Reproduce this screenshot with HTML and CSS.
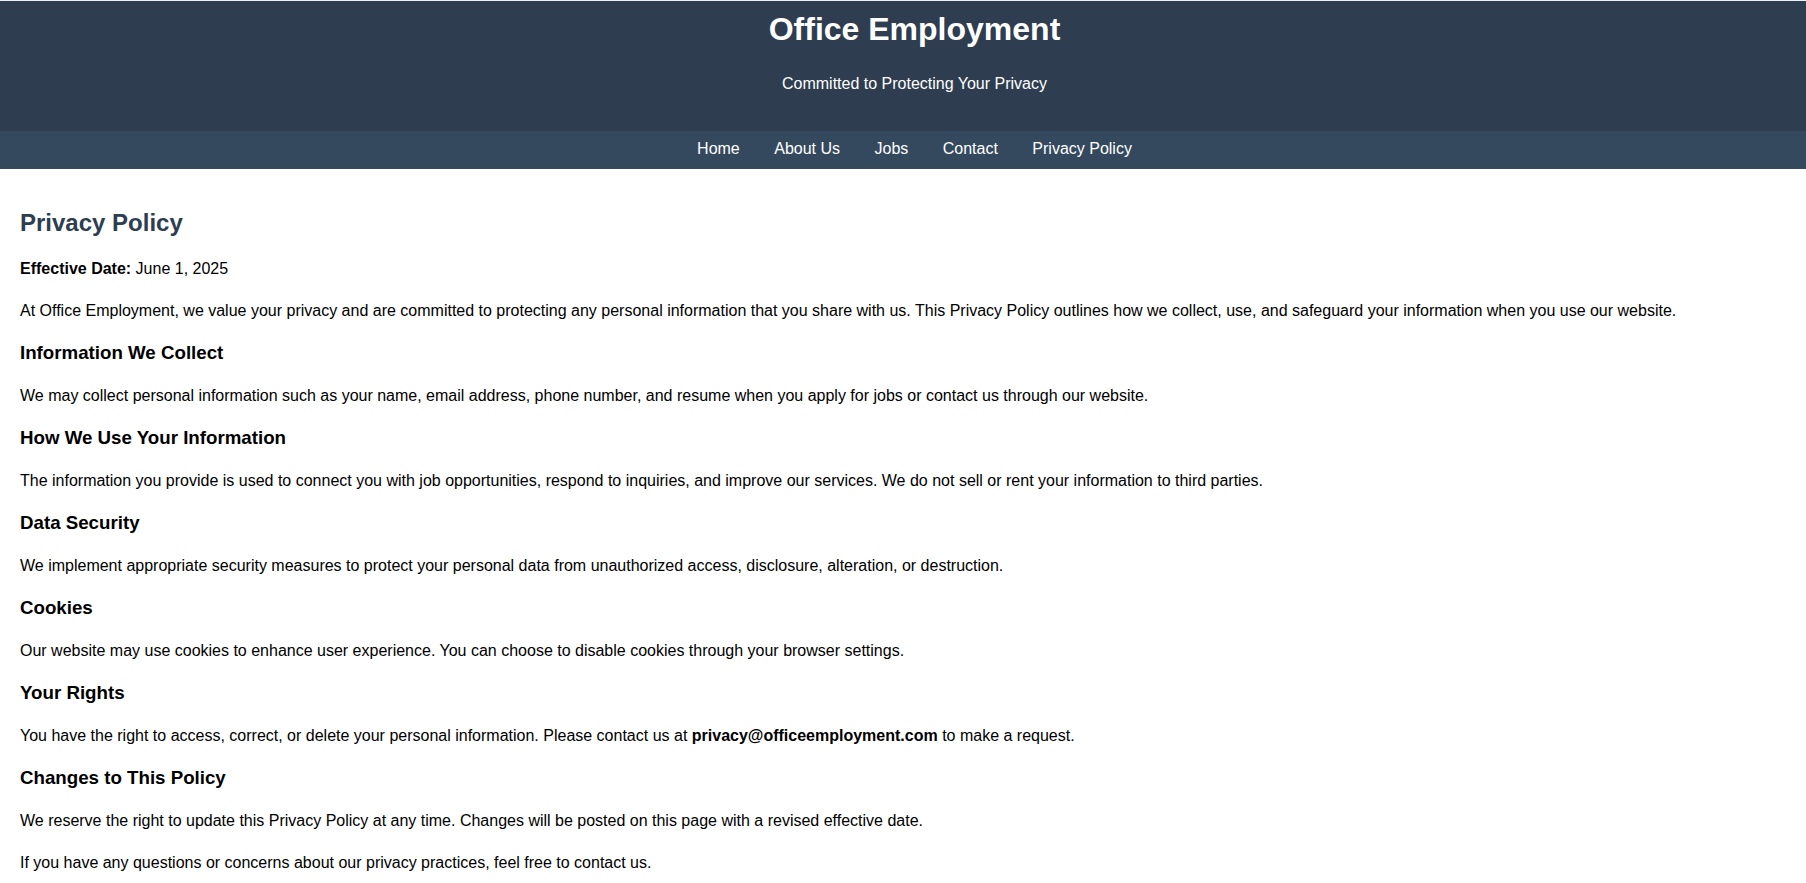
FILE: index.html
```html
<!DOCTYPE html>
<html lang="en">
<head>
<meta charset="utf-8">
<title>Privacy Policy - Office Employment</title>
<link rel="stylesheet" href="styles.css">
</head>
<body>
<header class="site-header">
  <h1 class="site-title">Office Employment</h1>
  <p class="site-tagline">Committed to Protecting Your Privacy</p>
</header>
<nav class="site-nav">
  <a href="#">Home</a>
  <a href="#">About Us</a>
  <a href="#">Jobs</a>
  <a href="#">Contact</a>
  <a href="#">Privacy Policy</a>
</nav>
<main class="content">
  <h2 class="page-title">Privacy Policy</h2>
  <p><strong>Effective Date:</strong> June 1, 2025</p>
  <p>At Office Employment, we value your privacy and are committed to protecting any personal information that you share with us. This Privacy Policy outlines how we collect, use, and safeguard your information when you use our website.</p>

  <h3>Information We Collect</h3>
  <p>We may collect personal information such as your name, email address, phone number, and resume when you apply for jobs or contact us through our website.</p>

  <h3>How We Use Your Information</h3>
  <p>The information you provide is used to connect you with job opportunities, respond to inquiries, and improve our services. We do not sell or rent your information to third parties.</p>

  <h3>Data Security</h3>
  <p>We implement appropriate security measures to protect your personal data from unauthorized access, disclosure, alteration, or destruction.</p>

  <h3>Cookies</h3>
  <p>Our website may use cookies to enhance user experience. You can choose to disable cookies through your browser settings.</p>

  <h3>Your Rights</h3>
  <p>You have the right to access, correct, or delete your personal information. Please contact us at <strong>privacy@officeemployment.com</strong> to make a request.</p>

  <h3>Changes to This Policy</h3>
  <p>We reserve the right to update this Privacy Policy at any time. Changes will be posted on this page with a revised effective date.</p>

  <p>If you have any questions or concerns about our privacy practices, feel free to contact us.</p>
</main>
</body>
</html>
```

FILE: styles.css
```css
html, body {
  margin: 0;
  padding: 0;
}

body {
  font-family: "Liberation Sans", Arial, sans-serif;
  color: #000;
  background: #fff;
  border-top: 1px solid #eef0f2;
}

.site-header {
  background: #2e3d4f;
  color: #fff;
  text-align: center;
  padding: 10px 0 34px 23px;
}

.site-title {
  margin: 0 0 23px;
  font-size: 32px;
  font-weight: bold;
}

.site-tagline {
  margin: 0;
  font-size: 16px;
  line-height: 1.6;
}

.site-nav {
  background: #34495e;
  text-align: center;
  padding: 9px 0 11px 23px;
  font-size: 16px;
}

.site-nav a {
  color: #fff;
  text-decoration: none;
  margin: 0 15px;
}

.content {
  padding: 20px;
}

.page-title {
  color: #2c3e50;
  font-size: 24px;
  margin: 19.92px 0;
}

.content p {
  font-size: 16px;
  line-height: 1.6;
  margin: 16px 0;
}

.content h3 {
  font-size: 18.72px;
  margin: 18.72px 0;
}
```
